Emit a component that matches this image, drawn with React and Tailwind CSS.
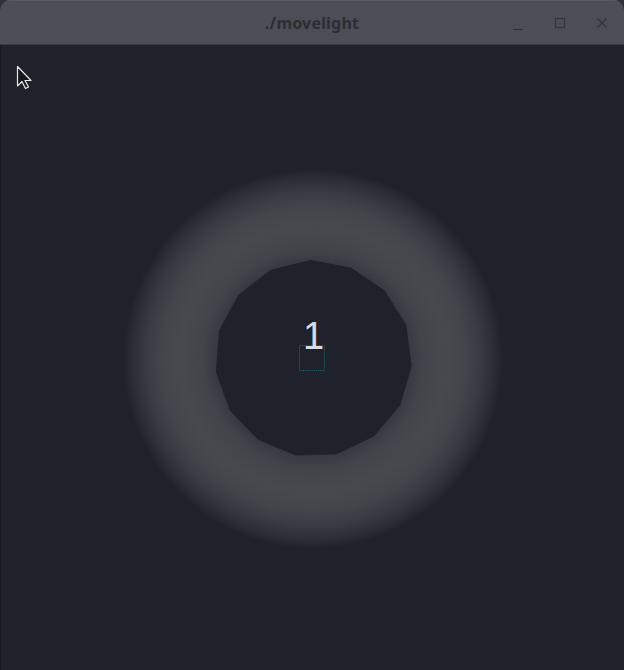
import React from "react";

function ringPolygon(cx, cy, r, n, rot) {
  const pts = [];
  for (let i = 0; i < n; i++) {
    const a = rot + (i * 2 * Math.PI) / n;
    pts.push(`${(cx + r * Math.cos(a)).toFixed(1)},${(cy + r * Math.sin(a)).toFixed(1)}`);
  }
  return pts.join(" ");
}

export default function App() {
  return (
    <div className="w-[624px] h-[670px] bg-[#2c2f35] overflow-hidden">
      <div className="w-full h-full rounded-t-[10px] overflow-hidden flex flex-col bg-[#1f222a]">
        <div className="h-[45px] shrink-0 bg-[#4b4e56] border-t border-[#595c63] border-b border-b-[#393b41] relative flex items-center justify-center">
          <span className="text-[16px] font-bold text-[#2b2d32] tracking-[0.2px]" style={{ fontFamily: '"Noto Sans", "Open Sans", sans-serif' }}>
            ./movelight
          </span>
          <div className="absolute right-0 top-0 h-full flex items-center">
            <svg width="12" height="12" viewBox="0 0 12 12" className="mr-[30px] mt-[4px]">
              <line x1="1" y1="10.5" x2="11" y2="10.5" stroke="#30323a" strokeWidth="1.2" />
            </svg>
            <svg width="12" height="12" viewBox="0 0 12 12" className="mr-[30px]">
              <rect x="1.5" y="1.5" width="9" height="9" fill="none" stroke="#30323a" strokeWidth="1.2" />
            </svg>
            <svg width="12" height="12" viewBox="0 0 12 12" className="mr-[16px]">
              <path d="M1.5 1.5 L10.5 10.5 M10.5 1.5 L1.5 10.5" stroke="#30323a" strokeWidth="1.3" />
            </svg>
          </div>
        </div>
        <div className="relative flex-1 bg-[#1f222a] border-l border-[#17191e]">
          <svg width="623" height="625" className="absolute left-0 top-0">
            <defs>
              <radialGradient id="torus" cx="312" cy="314" r="190" gradientUnits="userSpaceOnUse">
                <stop offset="0.5" stopColor="#36383f" />
                <stop offset="0.58" stopColor="#42444b" />
                <stop offset="0.7" stopColor="#47494f" />
                <stop offset="0.8" stopColor="#43454c" />
                <stop offset="0.88" stopColor="#393b42" />
                <stop offset="0.95" stopColor="#2b2e35" />
                <stop offset="1" stopColor="#1f222a" />
              </radialGradient>
            </defs>
            <polygon points={ringPolygon(312, 314, 190, 28, 0.05)} fill="url(#torus)" />
            <polygon points={ringPolygon(312.5, 313.5, 98.5, 15, -1.6)} fill="#1f222a" />
            <rect x="298.5" y="300.5" width="25" height="25" fill="none" stroke="#1c5b5c" strokeWidth="1" strokeDasharray="1.5 0.7" />
            <path
              d="M16.5 21.5 L16.5 41 L21 36.5 L24.5 43.5 L27.5 42 L24 35.5 L30 35.5 Z"
              fill="#15171b"
              stroke="#e8e8e8"
              strokeWidth="1.2"
              strokeLinejoin="round"
            />
          </svg>
          <div
            className="absolute left-[302px] top-[272px] text-[38px] leading-none text-[#d7dce4]"
            style={{ fontFamily: '"Liberation Sans", Arial, sans-serif' }}
          >
            1
          </div>
        </div>
      </div>
    </div>
  );
}
